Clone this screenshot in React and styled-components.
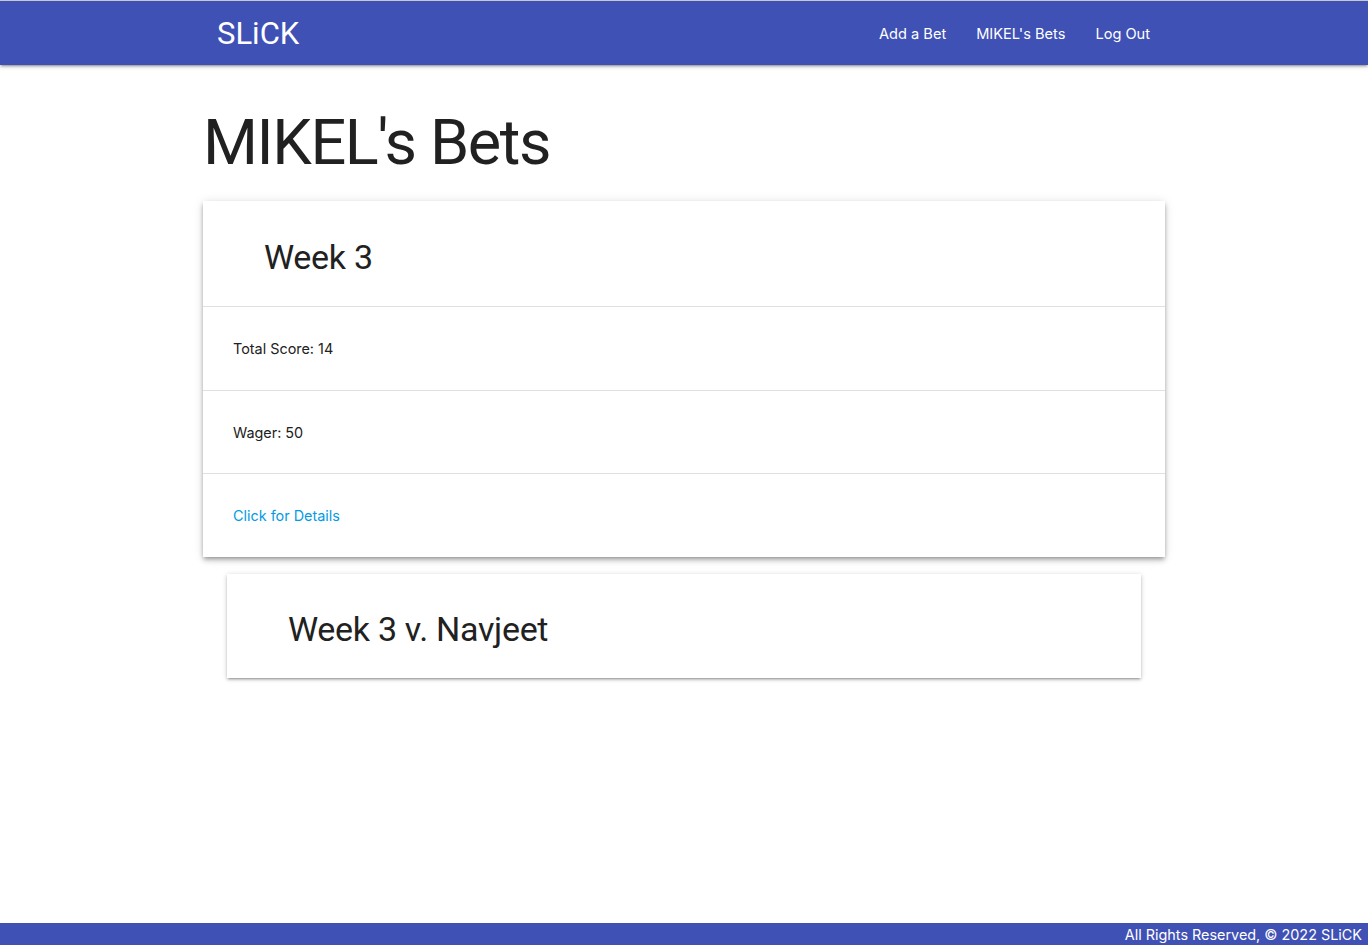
import React from "react";
import styled, { createGlobalStyle } from "styled-components";

const Global = createGlobalStyle`
  html, body { margin: 0; padding: 0; }
  body {
    font-family: Inter, Roboto, "Noto Sans", sans-serif;
    color: rgba(0,0,0,0.87);
    background: #fff;
  }
  * { box-sizing: border-box; }
`;

const Page = styled.div`
  min-height: 100vh;
  display: flex;
  flex-direction: column;
`;

const NavBar = styled.nav`
  background: #3f51b5;
  height: 65px;
  border-top: 1px solid #c8c8c8;
  box-shadow: 0 2px 2px 0 rgba(0,0,0,0.14), 0 3px 1px -2px rgba(0,0,0,0.12), 0 1px 5px 0 rgba(0,0,0,0.2);
  color: #fff;
`;

const Container = styled.div`
  width: 962px;
  margin: 0 auto;
`;

const NavInner = styled(Container)`
  height: 100%;
  display: flex;
  align-items: center;
  justify-content: space-between;
`;

const Brand = styled.a`
  font-family: Roboto, Inter, sans-serif;
  font-size: 31px;
  color: #fff;
  text-decoration: none;
  padding-left: 14px;
`;

const Links = styled.ul`
  list-style: none;
  display: flex;
  margin: 0;
  padding: 2px 0 0 0;
`;

const NavLink = styled.a`
  display: block;
  padding: 0 15px;
  font-size: 14.6px;
  color: #fff;
  text-decoration: none;
`;

const Main = styled.main`
  flex: 1;
`;

const Title = styled.h1`
  font-family: Roboto, Inter, sans-serif;
  font-size: 63px;
  font-weight: 400;
  line-height: 1.1;
  letter-spacing: -1.4px;
  margin: 43px 0 24px 0;
  color: #212121;
`;

const Card = styled.section`
  background: #fff;
  margin: ${(p) => (p.$inset ? "0 24px" : "0")};
  box-shadow: ${(p) =>
    p.$deep
      ? "0 4px 5px 0 rgba(0,0,0,0.14), 0 1px 10px 0 rgba(0,0,0,0.12), 0 2px 4px -1px rgba(0,0,0,0.3)"
      : "0 2px 2px 0 rgba(0,0,0,0.14), 0 3px 1px -2px rgba(0,0,0,0.12), 0 1px 5px 0 rgba(0,0,0,0.2)"};
  & + & { margin-top: 17px; }
`;

const CardHeader = styled.div`
  height: ${(p) => (p.$h ? p.$h : 105)}px;
  display: flex;
  align-items: center;
  padding: 7px 0 0 61px;
  font-family: Roboto, Inter, sans-serif;
  font-size: 34px;
  letter-spacing: -0.3px;
  color: #212121;
`;

const Row = styled.div`
  height: 83.5px;
  display: flex;
  align-items: center;
  padding-left: 30px;
  border-top: 1px solid #e0e0e0;
  font-size: 14.4px;
  color: #212121;
`;

const DetailLink = styled.a`
  color: #039be5;
  text-decoration: none;
  font-size: 14.4px;
`;

const Footer = styled.footer`
  background: #3f51b5;
  height: 22px;
  color: #fff;
  font-size: 14.4px;
  display: flex;
  align-items: center;
  justify-content: flex-end;
  padding-right: 6px;
`;

export default function App() {
  return (
    <>
      <Global />
      <Page>
        <NavBar>
          <NavInner>
            <Brand href="#">SLiCK</Brand>
            <Links>
              <li><NavLink href="#">Add a Bet</NavLink></li>
              <li><NavLink href="#">MIKEL's Bets</NavLink></li>
              <li><NavLink href="#">Log Out</NavLink></li>
            </Links>
          </NavInner>
        </NavBar>
        <Main>
          <Container>
            <Title>MIKEL's Bets</Title>
            <Card $deep>
              <CardHeader>Week 3</CardHeader>
              <Row>Total Score: 14</Row>
              <Row>Wager: 50</Row>
              <Row><DetailLink href="#">Click for Details</DetailLink></Row>
            </Card>
            <Card $inset>
              <CardHeader $h={104}>Week 3 v. Navjeet</CardHeader>
            </Card>
          </Container>
        </Main>
        <Footer>All Rights Reserved, © 2022 SLiCK</Footer>
      </Page>
    </>
  );
}
